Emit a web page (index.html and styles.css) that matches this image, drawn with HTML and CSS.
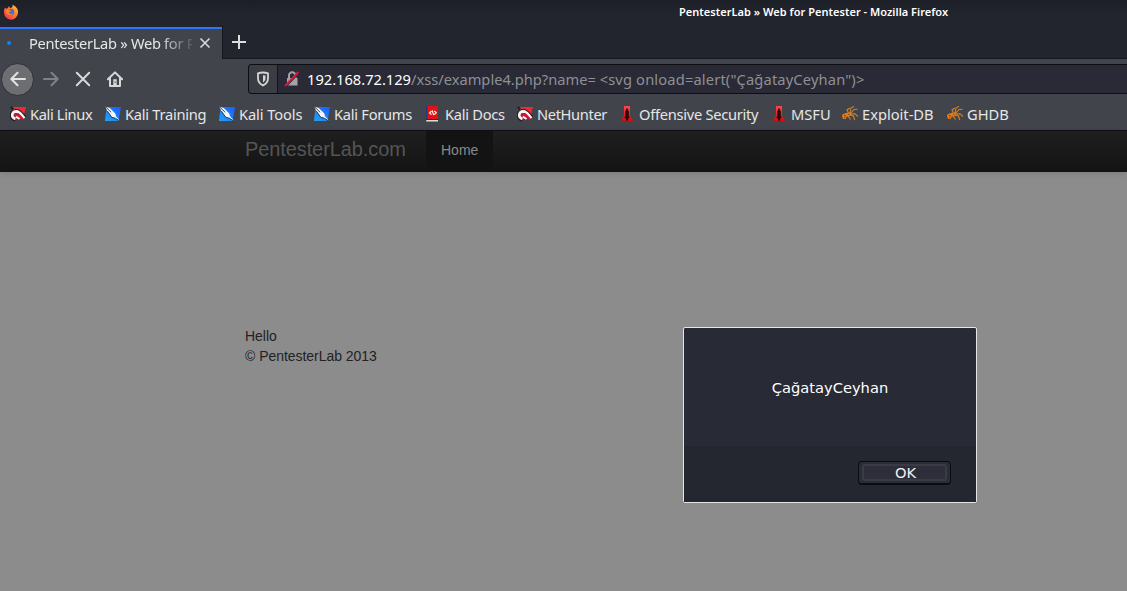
FILE: index.html
```html
<!DOCTYPE html>
<html lang="en">
<head>
<meta charset="utf-8">
<title>PentesterLab » Web for Pentester</title>
<link rel="stylesheet" href="styles.css">
</head>
<body>
<svg class="defs" width="0" height="0">
  <defs>
    <linearGradient id="fire" x1="1" y1="0" x2="0.2" y2="1"><stop offset="0" stop-color="#ffd03a"/><stop offset=".5" stop-color="#ff7b2e"/><stop offset="1" stop-color="#f0304c"/></linearGradient>
    <linearGradient id="blue" x1="1" y1="0" x2="0" y2="1"><stop offset="0" stop-color="#1a5cff"/><stop offset="1" stop-color="#22a4f5"/></linearGradient>
    <linearGradient id="red" x1="0" y1="0" x2="0" y2="1"><stop offset="0" stop-color="#ff4747"/><stop offset="1" stop-color="#c80d0d"/></linearGradient>
  </defs>
  <symbol id="magnet" viewBox="0 0 16 16">
    <path d="M2.500 1H16l-3 11.500H5z" fill="#f02834"/>
    <path d="M0 1l2-.5L4 2.500 2 4z" fill="#202127"/>
    <path d="M5.500 13.500C.500 12.500 .5 5.800 6 5c4-.5 5.500 3.500 9 7" fill="none" stroke="#301a20" stroke-width="4"/>
    <path d="M5.500 13C.800 11.500 1.300 5.500 6.500 5.300c3.500 0 5 4 8 6.900" fill="none" stroke="#f5f5f5" stroke-width="2.700"/>
    <path d="M4.500 10c.5-2.500 3.500-2.500 5-.3l3.500 3.800" fill="none" stroke="#c71634" stroke-width="2.200"/>
    <path d="M6 10.800l3.500 2.200" stroke="#fff" stroke-width="1.600"/>
  </symbol>
  <symbol id="knife" viewBox="0 0 16 16">
    <path d="M2.500 1H16l-2.500 14H0L1 6z" fill="url(#blue)"/>
    <path d="M.300.500L5 2.200l5.300 5.300.7 2.800 4.500 5-5-3-3.800-1.200-4.400-6z" fill="#f5f6f8"/>
    <path d="M.200.500l6 5.800M2.300 5l4.400 6.200 3.800 1.100 5 3.200" fill="none" stroke="#223243" stroke-width=".9"/>
  </symbol>
  <symbol id="book" viewBox="0 0 16 16">
    <path d="M1.500 0H13v13.500H1.500z" fill="#e01313"/><path d="M1 0h1.500v14H1z" fill="#26377a"/>
    <path d="M1.500 14H13v1.500H1z" fill="#ddd"/><path d="M1.500 13.200h11.500v.8H1.500z" fill="#5b1018"/>
    <path d="M6.500 5L4.500 7l2 1.700M9.300 5l2 1.700-2 2M7.300 4.500l1.300 4.700" fill="none" stroke="#fff" stroke-width="1.100"/>
  </symbol>
  <symbol id="tower" viewBox="0 0 16 16">
    <path d="M5 0h6v9.500l3.500 6H1.500L5 9.500z" fill="url(#red)"/>
    <path d="M7.200 2.500h1.600V4.500h1v6l1.200 1-1.800 1V14.500H7V12.500L5 11.500l1.300-1v-6h.9z" fill="#2b0709"/>
  </symbol>
  <symbol id="bug" viewBox="0 0 16 16">
    <path d="M0 9c2-1.800 5-2.800 8.500-2.500l1 1.500-1.500 2.200-3 .3-2 2.500H1.500L.500 12z" fill="#e57b12"/>
    <path d="M6.500 7L5 4l2.800-2M8 7l1-5 3-1.700M9 7l3-3.500 3.500-.3M9 8l4-.3 3 2.800M8 9l3.500 1 1.200 4M6 10l2.500 3.500M4 10l-1 3" fill="none" stroke="#d98225" stroke-width="1.100"/>
    <path d="M2 9.500l2 .5M6 8l1.500 1M2 11.500l1 .5" stroke="#6d3b12" stroke-width=".9"/>
  </symbol>
</svg>

<header class="titlebar">
  <svg class="firefox" viewBox="0 0 16 16" width="16" height="16">
    <path d="M2 3.500l1 1.300 1.800-.5L6 2l1 2.200L9.500 3 9.500.8c4 1.700 5.900 4.700 5.500 8A7 7 0 0 1 1 8.500C.900 6.500 1.300 5 2 3.500z" fill="url(#fire)"/>
    <circle cx="8" cy="8" r="3.200" fill="#3f6fd0"/>
    <path d="M3 5.500l4 .3 1 1.200-2 1.200c.3 1.800 2.200 2 4 1.300-1 2.500-6 2-7-1z" fill="#ff7a35"/>
  </svg>
  <span class="window-title">PentesterLab » Web for Pentester - Mozilla Firefox</span>
</header>

<div class="tabs">
  <div class="tab">
    <i class="loading"></i>
    <span class="tab-title">PentesterLab » Web for P</span>
    <svg class="close" viewBox="0 0 12 12" width="12" height="12"><path d="M1.500 1.500l9 9M10.500 1.500l-9 9" stroke="#d6d6d6" stroke-width="1.700"/></svg>
  </div>
  <div class="tab-rest"><svg viewBox="0 0 16 16" width="16" height="16"><path d="M8 1v14M1 8h14" stroke="#dcdcdc" stroke-width="2"/></svg></div>
</div>

<nav class="toolbar">
  <span class="back"><svg viewBox="0 0 16 16" width="16" height="16"><path d="M15 8H1.500M7.500 1.700L1.300 8l6.200 6.300" fill="none" stroke="#e2e2e2" stroke-width="2" stroke-linecap="round" stroke-linejoin="round"/></svg></span>
  <svg class="forward" viewBox="0 0 16 16" width="16" height="16"><path d="M1 8h13.500M8.500 1.700L14.700 8l-6.200 6.300" fill="none" stroke="#808185" stroke-width="2" stroke-linecap="round" stroke-linejoin="round"/></svg>
  <svg class="stop" viewBox="0 0 16 16" width="16" height="16"><path d="M1.800 1.800l12.400 12.400M14.200 1.800L1.800 14.200" stroke="#d8d8d8" stroke-width="2" stroke-linecap="round"/></svg>
  <svg class="home" viewBox="0 0 16 16" width="16" height="16"><path d="M.900 8.300L8 1.400l7.100 6.900M3 7.500V15h10V7.500" fill="none" stroke="#d8d8d8" stroke-width="2" stroke-linecap="round" stroke-linejoin="round"/><path d="M6.300 8.200h3.400V14H6.300z" fill="#d8d8d8"/><path d="M7.700 10.500h.9V12h-.9z" fill="#404148"/></svg>
  <div class="urlbar">
    <span class="shield"><svg viewBox="0 0 14 16" width="14" height="16"><path d="M7 1.500c2 0 3.700.4 5 .9v4.800c0 3.300-2 5.700-5 7.200-3-1.500-5-3.900-5-7.200V2.400c1.300-.5 3-.9 5-.9z" fill="none" stroke="#d6d6d6" stroke-width="1.800"/><path d="M7 4.300v7.200c1.700-1.200 2.500-2.700 2.500-4.300V4.600z" fill="#d6d6d6"/></svg></span>
    <svg class="lock" viewBox="0 0 16 16" width="16" height="16"><path d="M5 7V4.500a3.200 3.200 0 0 1 6.400 0V7" fill="none" stroke="#a4a4a8" stroke-width="2"/><path d="M3 7h10.500v7.500H3z" fill="#a4a4a8"/><path d="M2 15.500L15.500 1.500" stroke="#292a35" stroke-width="1.500"/><path d="M1 15L14.500 1" stroke="#e5133f" stroke-width="2"/></svg>
    <span class="url"><b>192.168.72.129</b>/xss/example4.php?name= <span class="payload">&lt;svg onload=alert("ÇağatayCeyhan")&gt;</span></span>
  </div>
</nav>

<div class="bookmarks">
  <span class="tight"><svg><use href="#magnet"/></svg>Kali Linux</span>
  <span class="snug"><svg><use href="#knife"/></svg>Kali Training</span>
  <span class="near"><svg><use href="#knife"/></svg>Kali Tools</span>
  <span class="snug"><svg><use href="#knife"/></svg>Kali Forums</span>
  <span class="snug"><svg><use href="#book"/></svg>Kali Docs</span>
  <span class="tight"><svg><use href="#magnet"/></svg>NetHunter</span>
  <span class="snug"><svg><use href="#tower"/></svg>Offensive Security</span>
  <span><svg><use href="#tower"/></svg>MSFU</span>
  <span><svg><use href="#bug"/></svg>Exploit-DB</span>
  <span><svg><use href="#bug"/></svg>GHDB</span>
</div>

<main class="page">
  <div class="navbar"><span class="brand">PentesterLab.com</span><span class="nav-home">Home</span></div>
  <div class="content">Hello<br>© PentesterLab 2013</div>
  <div class="dialog">
    <div class="message">ÇağatayCeyhan</div>
    <div class="actions"><button class="ok"><span>OK</span></button></div>
  </div>
</main>
</body>
</html>
```
FILE: styles.css
```css
* { box-sizing: border-box; }
body { margin: 0; width: 1127px; height: 591px; overflow: hidden; background: #8c8c8c; font-family: "Noto Sans", sans-serif; color: #e6e6e6; }
svg { flex: none; display: block; }
.defs { position: absolute; }
.titlebar { height: 26px; display: flex; background: linear-gradient(#1c1f26, #22252e 60%); }
.firefox { margin: 4px 0 0 3px; }
.window-title { margin-left: 660px; font-size: 11px; font-weight: 600; line-height: 24px; letter-spacing: .03px; color: #fff; white-space: nowrap; }
.tabs { height: 33px; display: flex; background: #22252e; }
.tab { width: 222px; display: flex; align-items: center; padding-bottom: 2px; background: #42444b; border-top: 2px solid #2a76ff; margin-top: 1px; }
.loading { width: 4px; height: 4px; margin-left: 7px; border-radius: 50%; background: #0a84ff; }
.tab-title { width: 163px; margin-left: 18px; font-size: 14.67px; line-height: 26px; letter-spacing: -.3px; white-space: nowrap; -webkit-mask-image: linear-gradient(90deg, #000 130px, transparent 168px); mask-image: linear-gradient(90deg, #000 130px, transparent 168px); }
.close { margin-left: 7px; }
.tab-rest { flex: 1; display: flex; align-items: center; padding-left: 8px; border-left: 1px solid #15171c; border-bottom: 1px solid #15171c; }
.toolbar { height: 40px; display: flex; align-items: center; background: #42444b; }
.back { flex: none; width: 33px; height: 33px; margin-left: 1px; border-radius: 50%; border: 1px solid #2e3036; background: #6d6e72; display: grid; place-items: center; }
.forward { margin-left: 9px; }
.stop { margin-left: 16px; }
.home { margin-left: 16px; }
.urlbar { margin-left: 125px; flex: 1; height: 30px; display: flex; align-items: center; background: #292a35; border: 1px solid #0d0e12; border-right: 0; border-radius: 4px 0 0 4px; }
.shield { width: 29px; display: grid; place-items: center; border-right: 1px solid #14151a; border-radius: 3px 0 0 3px; background: #3b3d45; align-self: stretch; }
.lock { margin-left: 6px; }
.url { margin-left: 7px; font-size: 14.67px; color: #8f9095; white-space: pre; }
.url b { font-weight: 400; color: #fff; }
.payload { letter-spacing: .16px; }
.bookmarks { height: 32px; padding: 0 0 1px 10px; display: grid; align-items: center; grid-template-columns: 95px 114px 95px 111px 92px 102px 152px 71px 105px auto; background: #42444b; border-bottom: 1px solid #0f1014; font-size: 14.67px; }
.bookmarks span { display: flex; align-items: center; gap: 4px; white-space: nowrap; }
.bookmarks svg { width: 16px; height: 16px; }
.tight { letter-spacing: -.36px; }
.snug { letter-spacing: -.27px; }
.near { letter-spacing: -.1px; }
.page { position: relative; height: 460px; background: #8c8c8c; font-family: "Liberation Sans", Arial, sans-serif; }
.navbar { height: 41px; display: flex; padding-left: 245px; background: linear-gradient(#1f1f1f, #141414); border-bottom: 1px solid #121212; box-shadow: 0 1px 6px rgba(0,0,0,.12); }
.brand { width: 181px; font-size: 20px; line-height: 37px; letter-spacing: -.1px; color: #555; }
.nav-home { width: 67px; padding-left: 15px; font-size: 14px; line-height: 39px; color: #898989; background: #131313; }
.content { margin: 154px 0 0 245px; font-size: 14px; line-height: 20px; letter-spacing: -.04px; color: #222; }
.dialog { position: absolute; left: 683px; top: 196px; width: 294px; height: 176px; border: 1px solid #e5e5e5; border-radius: 2px; background: #282a35; font-family: "DejaVu Sans", sans-serif; font-size: 14.67px; color: #fff; }
.message { height: 118px; line-height: 119px; text-align: center; }
.actions { height: 56px; display: flex; justify-content: flex-end; padding: 15px 25px 0 0; background: #252730; }
.ok { width: 93px; height: 24px; padding: 2px 3px; border: 1px solid #0b0c10; border-bottom-width: 2px; border-radius: 4px; background: #2a2c37; font: inherit; color: #f0f0f0; }
.ok span { display: block; height: 17px; padding-left: 2px; line-height: 14px; border: 2px solid #3a3b47; border-radius: 3px; background: #2d2e3a; }
```
